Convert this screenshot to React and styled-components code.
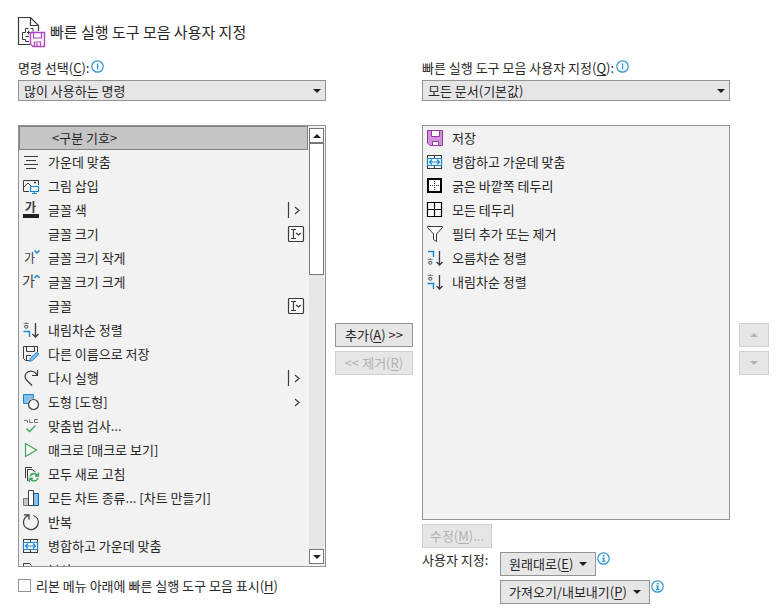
import React from "react";
import styled, { createGlobalStyle, css } from "styled-components";

const INK = "#3b3b3b";
const BLUE = "#1e86cc";
const GREEN = "#3fa45b";

const GlobalStyle = createGlobalStyle`
  *, *::before, *::after { box-sizing: border-box; }
  body {
    margin: 0;
    background: #fff;
    color: #262626;
    font: 13px/16px "Noto Sans CJK KR", sans-serif;
  }
  button, select, input { font: inherit; color: inherit; margin: 0; }
  u { text-underline-offset: 2px; }
`;

const Page = styled.main`
  display: flex;
  flex-direction: column;
  height: 100vh;
  min-height: 480px;
  padding: 16px 9px 9px 18px;
`;

const Header = styled.header`
  display: flex;
  align-items: center;
  gap: 4px;
  height: 32px;
  margin-bottom: 12px;
`;

const Title = styled.h1`
  margin: 0;
  font-size: 15px;
  line-height: 20px;
  font-weight: 400;
`;

const Columns = styled.div`
  flex: 1;
  min-height: 0;
  display: grid;
  grid-template-columns: minmax(0, 1fr) 78px minmax(0, 1fr) 30px;
  gap: 9px;
`;

const Panel = styled.section`
  display: flex;
  flex-direction: column;
  min-height: 0;
`;

const ButtonStack = styled.div`
  display: flex;
  flex-direction: column;
  justify-content: center;
  gap: 4px;
  padding-top: 34px;
`;

const LabelRow = styled.div`
  display: flex;
  align-items: flex-start;
  gap: 2px;
  height: 20px;
`;

const SelectBox = styled.div`
  display: grid;
  align-items: center;
  margin-bottom: 24px;

  > * { grid-area: 1 / 1; }
  > svg { justify-self: end; margin-right: 5px; pointer-events: none; }
`;

const Select = styled.select`
  appearance: none;
  width: 100%;
  height: 21px;
  padding: 0 20px 0 5px;
  border: 1px solid #939393;
  border-radius: 0;
  background: #e6e6e6;
  line-height: 19px;
`;

const ListFrame = styled.div`
  flex: 1 1 0;
  min-height: 0;
  display: flex;
  border: 1px solid #939393;
  background: #f2f2f2;
`;

const List = styled.ul`
  flex: 1;
  min-width: 0;
  margin: 0;
  padding: 0;
  list-style: none;
  overflow: hidden;
`;

const Item = styled.li`
  display: flex;
  align-items: center;
  gap: 9px;
  height: 24px;
  padding: 0 5px 0 4px;
  white-space: nowrap;

  ${(p) =>
    p.$selected &&
    css`
      margin-right: 1px;
      padding-left: 8px;
      background: #c5c5c5;
      outline: 1px solid #828282;
      outline-offset: -1px;
    `}
`;

const IconSlot = styled.span`
  flex: none;
  display: flex;
  width: 16px;
  height: 16px;
`;

const ItemText = styled.span`
  flex: 1;
`;

const ScrollBar = styled.div`
  flex: none;
  display: flex;
  flex-direction: column;
  width: 15px;
  margin: 2px 1px 2px 0;
  background: #e6e6e6;
`;

const ScrollButton = styled.button`
  display: flex;
  align-items: center;
  justify-content: center;
  width: 15px;
  height: 15px;
  padding: 0;
  border: 1px solid #777;
  background: #fff;
`;

const Thumb = styled.div`
  height: 132px;
  margin-bottom: auto;
  border: 1px solid #777;
  background: #fff;
`;

const Button = styled.button`
  display: flex;
  align-items: center;
  justify-content: ${(p) => (p.$menu ? "flex-start" : "center")};
  gap: 6px;
  min-width: ${(p) => p.$width || "0"};
  height: 24px;
  padding: 0 ${(p) => (p.$menu ? "8px" : "6px")};
  border: 1px solid #939393;
  background: #e6e6e6;
  white-space: nowrap;

  &:disabled {
    border-color: #d0d0d0;
    color: #b1b1b1;
  }
`;

const CheckRow = styled.label`
  display: flex;
  align-items: center;
  gap: 5px;
  height: 37px;
  white-space: nowrap;
`;

const CheckBox = styled.input`
  appearance: none;
  width: 13px;
  height: 13px;
  border: 1px solid #939393;
  background: #fff;

  &:checked { background: #3b3b3b; }
`;

const Actions = styled.div`
  display: flex;
  flex-direction: column;
  align-items: flex-start;
  gap: 4px;
  padding-top: 4px;
`;

const CustomGrid = styled.div`
  display: grid;
  grid-template-columns: 78px auto;
  row-gap: 4px;
`;

const MenuLine = styled.div`
  grid-column: 2;
  display: flex;
  align-items: flex-start;
  gap: 1px;
`;

const Drawing = styled.svg`
  flex: none;
  overflow: visible;
`;

const Svg = ({ w = 16, h = 16, children }) => (
  <Drawing width={w} height={h} viewBox={`0 0 ${w} ${h}`} fill="none" stroke={INK} aria-hidden="true">
    {children}
  </Drawing>
);

const Glyph = ({ x, y, size, color = INK, bold, children }) => (
  <text x={x} y={y} fontSize={size} fill={color} stroke="none" fontWeight={bold ? 700 : 400}>
    {children}
  </text>
);

const Caret = ({ up, color = "#222" }) => (
  <Svg w={8} h={4}>
    <path d={up ? "M0 4 4 0 8 4z" : "M0 0H8L4 4z"} fill={color} stroke="none" />
  </Svg>
);

const InfoIcon = ({ full }) => (
  <Svg w={13} h={13}>
    <circle cx="6.5" cy="6.5" r="5.7" fill="#fff" stroke="#2a95d5" strokeWidth="1.2" />
    {full ? (
      <path d="M5.800 3h1.700v1.500H5.800zM5 5.500h2.500V9H8.500v1H5V9h.8V6.500H5z" fill="#2a95d5" stroke="none" />
    ) : (
      <path d="M6 3.500h1.200v6H6z" fill="#2a95d5" stroke="none" />
    )}
  </Svg>
);

const SortArrow = () => <path d="M12.500 1v14M9.500 12l3 3 3-3" strokeWidth="1.3" />;

const icons = {
  center: <path d="M1 2.5h14M3 6.5h10M1 10.5h14M3 14.5h10" />,
  picture: (
    <>
      <path d="M6 13.5H.5v-11h15V7M1 9l4-4 3 3" />
      <path d="M11 4.5h2" strokeWidth="1.5" />
      <path d="M7.5 8.5h8v5h-8zM11.5 14v1.5M9 15.5h5" stroke={BLUE} strokeWidth="1.2" />
    </>
  ),
  fontColor: (
    <>
      <Glyph x={2} y={10} size={12} bold>가</Glyph>
      <path d="M0 12h16v4H0z" fill="#222" stroke="none" />
    </>
  ),
  shrink: (
    <>
      <Glyph x={1} y={13} size={12}>가</Glyph>
      <path d="m11.500 .5 2.500 2.500 2.500-2.500" stroke={BLUE} strokeWidth="1.500" />
    </>
  ),
  grow: (
    <>
      <Glyph x={-1} y={12} size={14}>가</Glyph>
      <path d="m11.500 4 2.500-2.500 2.500 2.500" stroke={BLUE} strokeWidth="1.500" />
    </>
  ),
  desc: (
    <>
      <Glyph x={-1} y={7} size={9}>ㅎ</Glyph>
      <path d="M.5 9.500h6V15" stroke={BLUE} strokeWidth="1.400" />
      <SortArrow />
    </>
  ),
  asc: (
    <>
      <path d="M1 1.500h5.500V7" stroke={BLUE} strokeWidth="1.400" />
      <Glyph x={-1} y={15} size={9}>ㅎ</Glyph>
      <SortArrow />
    </>
  ),
  saveAs: (
    <>
      <path d="M6 14.5H2.5l-2-2V.5h14V6M3.5.5v5h8v-5M3.5 14.5v-5H8" />
      <path d="m6.500 15.500 1-3.500 6-5.500q2 0 2 2L9.500 14.500z" fill="#83beec" stroke={BLUE} />
    </>
  ),
  redo: <path d="M14.500 0v5.500H9M14 5C12 .5 5.500 0 3 3.500 1 6.500 2.500 9 4 10.500L9 15.500" strokeWidth="1.200" />,
  shapes: (
    <>
      <path d="M.5.5h10v9H.5z" fill="#83beec" stroke={BLUE} />
      <circle cx="10.500" cy="10.500" r="6" fill="#f2f2f2" stroke="none" />
      <circle cx="10.500" cy="10.500" r="5" fill="#fafafa" strokeWidth="1.200" />
    </>
  ),
  spell: (
    <>
      <path d="M1 2.500h3.500V5M6.500 1.500v3h3.500M15 1.500h-3.500v3H15" stroke="#777" />
      <path d="m3.500 10.500 3 3 6-6" stroke={GREEN} strokeWidth="1.400" />
    </>
  ),
  macro: <path d="M2.500 1.500v13L13.500 8z" fill="#f5fbf6" stroke={GREEN} strokeWidth="1.200" />,
  refresh: (
    <>
      <path d="M2.500 12V1.500H9M5.500 14.500h-1v-11H9L12.500 6" />
      <path d="M7 10.500q1-3 4-3 2 0 3.500 2M15.500 6.500v3.500H12M15 12q-1 3-4 3-2 0-3.500-2M6.500 16v-3.500H10" stroke={GREEN} strokeWidth="1.400" />
    </>
  ),
  chart: (
    <>
      <path d="M.5 8.500h5v7h-5z" fill="#c8c6c4" stroke="#777" />
      <path d="M10.500 3.500h5v12h-5z" fill="#83beec" stroke="#0c64aa" />
      <path d="M5.500.5h5v15h-5z" fill="#fff" />
    </>
  ),
  repeat: <path d="M1 .8h5v5M5.800 1.300C-.5 3.500-1 11 3.500 14c4 3 9.500 1.500 11.300-3C16.500 6.500 14 3 10.500 1.500" strokeWidth="1.200" />,
  merge: (
    <>
      <path d="M0 1.500h15M0 14.500h15M.5 1v3M14.500 1v3M.5 12v3M14.500 12v3M7.500 1v3M7.500 12v3" />
      <path d="M.5 4.500h14v7H.5z" fill="#f6fbff" stroke={BLUE} strokeWidth="1.200" />
      <path d="M2.500 8h10M5 5.500 2.500 8 5 10.500M10 5.500l2.500 2.500-2.500 2.500" stroke={BLUE} strokeWidth="1.200" />
    </>
  ),
  copy: <path d="M.5 14V1.500h6l2 2M4.500 15.500v-11h6l3 3v8z" />,
  save: (
    <>
      <path d="M.5.5h15v15H3l-2.500-2.500z" fill="#d191dc" stroke="#94389f" />
      <path d="M4.500.5h8v6h-8zM5.500 11.500h6v4h-6z" fill="#fff" stroke="#94389f" />
    </>
  ),
  thickBorder: (
    <>
      <path d="M1 1h13v13H1z" fill="#fff" stroke="#000" strokeWidth="2" />
      <path d="M7.500 3v10M3 7.500h10" stroke="#333" strokeDasharray="1 1" />
    </>
  ),
  allBorder: <path d="M.5.5h14v14H.5zM7.500 1v14M1 7.500h14" fill="#fff" stroke="#000" strokeWidth="1.200" />,
  filter: <path d="M.5.5h15v1l-6 6.500v7.500l-3-2V8l-6-6.500z" fill="#fafafa" />,
};

const trailing = {
  split: <path d="M.5 0v16M7 5l4 3.500L7 12" strokeWidth="1.200" />,
  menu: <path d="M7 5l4 3.500L7 12" strokeWidth="1.200" />,
  combo: (
    <>
      <rect x=".5" y=".5" width="15" height="15" rx="1" fill="#fafafa" strokeWidth="1.200" />
      <path d="M3 3.500h5M5.500 3.500v9M3 12.500h5M8 7l2.500 2L13 7" strokeWidth="1.200" />
    </>
  ),
};

const available = [
  { text: "<구분 기호>", selected: true },
  { text: "가운데 맞춤", icon: "center" },
  { text: "그림 삽입", icon: "picture" },
  { text: "글꼴 색", icon: "fontColor", end: "split" },
  { text: "글꼴 크기", end: "combo" },
  { text: "글꼴 크기 작게", icon: "shrink" },
  { text: "글꼴 크기 크게", icon: "grow" },
  { text: "글꼴", end: "combo" },
  { text: "내림차순 정렬", icon: "desc" },
  { text: "다른 이름으로 저장", icon: "saveAs" },
  { text: "다시 실행", icon: "redo", end: "split" },
  { text: "도형 [도형]", icon: "shapes", end: "menu" },
  { text: "맞춤법 검사...", icon: "spell" },
  { text: "매크로 [매크로 보기]", icon: "macro" },
  { text: "모두 새로 고침", icon: "refresh" },
  { text: "모든 차트 종류... [차트 만들기]", icon: "chart" },
  { text: "반복", icon: "repeat" },
  { text: "병합하고 가운데 맞춤", icon: "merge" },
  { text: "복사", icon: "copy" },
];

const chosen = [
  { text: "저장", icon: "save" },
  { text: "병합하고 가운데 맞춤", icon: "merge" },
  { text: "굵은 바깥쪽 테두리", icon: "thickBorder" },
  { text: "모든 테두리", icon: "allBorder" },
  { text: "필터 추가 또는 제거", icon: "filter" },
  { text: "오름차순 정렬", icon: "asc" },
  { text: "내림차순 정렬", icon: "desc" },
];

const CommandList = ({ items, label }) => (
  <List role="listbox" aria-label={label}>
    {items.map((item) => (
      <Item key={item.text} role="option" aria-selected={!!item.selected} $selected={item.selected}>
        <IconSlot>{item.icon && <Svg>{icons[item.icon]}</Svg>}</IconSlot>
        <ItemText>{item.text}</ItemText>
        {item.end && <IconSlot><Svg>{trailing[item.end]}</Svg></IconSlot>}
      </Item>
    ))}
  </List>
);

const Picker = ({ id, label, accessKey, value }) => (
  <>
    <LabelRow>
      <label htmlFor={id}>{label}(<u>{accessKey}</u>):</label>
      <InfoIcon />
    </LabelRow>
    <SelectBox>
      <Select id={id}>
        <option>{value}</option>
      </Select>
      <Caret />
    </SelectBox>
  </>
);

const HeaderIcon = () => (
  <Svg w={28} h={32}>
    <path d="M.5 1.500h12l8 8v18.500H.5z" fill="#fafafa" stroke="none" />
    <path d="M12 28.500H.5v-27h12l8 8V15M12.500 1.500v8h8" strokeWidth="1.200" />
    <path d="M10.500 12.500H7.500v4H4.500v7h3v2H11M12.500 12.500h2.500v3M9 16.500h3M10.500 14.500v4M7.500 20.500H11" />
    <path d="M12.500 16.500h14v14H15l-2.500-2.500z" fill="#fafafa" stroke="#b146c2" strokeWidth="1.400" />
    <path d="M15.500 17v5h8v-5M16.500 30v-4h6v4M19 27v3" stroke="#b146c2" strokeWidth="1.200" />
  </Svg>
);

export default function App() {
  return (
    <>
      <GlobalStyle />
      <Page>
        <Header>
          <HeaderIcon />
          <Title>빠른 실행 도구 모음 사용자 지정</Title>
        </Header>
        <Columns>
          <Panel>
            <Picker id="source" label="명령 선택" accessKey="C" value="많이 사용하는 명령" />
            <ListFrame>
              <CommandList items={available} label="명령" />
              <ScrollBar>
                <ScrollButton aria-label="위로 스크롤"><Caret up /></ScrollButton>
                <Thumb />
                <ScrollButton aria-label="아래로 스크롤"><Caret /></ScrollButton>
              </ScrollBar>
            </ListFrame>
            <CheckRow>
              <CheckBox type="checkbox" />
              <span>리본 메뉴 아래에 빠른 실행 도구 모음 표시(<u>H</u>)</span>
            </CheckRow>
          </Panel>
          <ButtonStack>
            <Button><span>추가(<u>A</u>) &gt;&gt;</span></Button>
            <Button disabled><span>&lt;&lt; 제거(<u>R</u>)</span></Button>
          </ButtonStack>
          <Panel>
            <Picker id="target" label="빠른 실행 도구 모음 사용자 지정" accessKey="Q" value="모든 문서(기본값)" />
            <ListFrame>
              <CommandList items={chosen} label="빠른 실행 도구 모음" />
            </ListFrame>
            <Actions>
              <Button disabled $width="70px"><span>수정(<u>M</u>)...</span></Button>
              <CustomGrid>
                <span>사용자 지정:</span>
                <MenuLine>
                  <Button $menu $width="96px"><span>원래대로(<u>E</u>)</span><Caret /></Button>
                  <InfoIcon full />
                </MenuLine>
                <MenuLine>
                  <Button $menu $width="150px"><span>가져오기/내보내기(<u>P</u>)</span><Caret /></Button>
                  <InfoIcon full />
                </MenuLine>
              </CustomGrid>
            </Actions>
          </Panel>
          <ButtonStack>
            <Button disabled aria-label="위로 이동"><Caret up color="#b1b1b1" /></Button>
            <Button disabled aria-label="아래로 이동"><Caret color="#b1b1b1" /></Button>
          </ButtonStack>
        </Columns>
      </Page>
    </>
  );
}
